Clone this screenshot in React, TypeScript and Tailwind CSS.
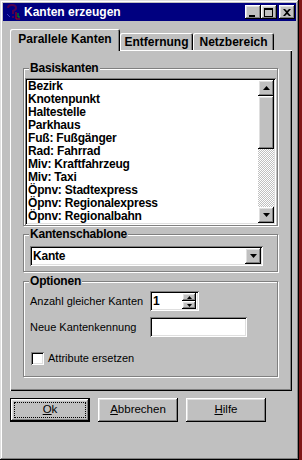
import React from "react";

const raised =
  "shadow-[inset_-1px_-1px_#000,inset_1px_1px_#fff,inset_-2px_-2px_#808080,inset_2px_2px_#dfdfdf]";
const sunken =
  "shadow-[inset_1px_1px_#808080,inset_-1px_-1px_#fff,inset_2px_2px_#000,inset_-2px_-2px_#dfdfdf]";

const items = [
  "Bezirk",
  "Knotenpunkt",
  "Haltestelle",
  "Parkhaus",
  "Fuß: Fußgänger",
  "Rad: Fahrrad",
  "Miv: Kraftfahrzeug",
  "Miv: Taxi",
  "Öpnv: Stadtexpress",
  "Öpnv: Regionalexpress",
  "Öpnv: Regionalbahn",
];

const Arrow = ({ up, w = 7 }: { up?: boolean; w?: number }) => {
  const h = Math.ceil(w / 2);
  return (
    <svg width={w} height={h} viewBox={`0 0 ${w} ${h}`}>
      <polygon
        points={up ? `${w / 2},0 ${w},${h} 0,${h}` : `0,0 ${w},0 ${w / 2},${h}`}
        fill="#000"
      />
    </svg>
  );
};

const Group = ({
  title,
  className,
  children,
}: {
  title: string;
  className: string;
  children: React.ReactNode;
}) => (
  <div className="relative pt-[6px]">
    <span className="absolute left-[6px] top-0 bg-[#c0c0c0] px-[1px] text-[12px] font-bold leading-[13px] tracking-[-0.2px]">
      {title}
    </span>
    <div
      className={
        "w-[255px] border border-[#808080] shadow-[inset_1px_1px_#fff,1px_1px_#fff] " +
        className
      }
    >
      {children}
    </div>
  </div>
);

const TitleBtn = ({ children, className }: { children: React.ReactNode; className?: string }) => (
  <div className={`flex h-[14px] w-[16px] items-center justify-center bg-[#c0c0c0] ${raised} ${className ?? ""}`}>
    {children}
  </div>
);

const Button = ({ first, rest, def }: { first: string; rest: string; def?: boolean }) =>
  def ? (
    <div className="h-[24px] w-[80px] border border-black">
      <div className={`flex h-full w-full items-center justify-center bg-[#c0c0c0] p-[3px] ${raised}`}>
        <div className="flex h-full w-full items-center justify-center border border-dotted border-black text-[11.5px]">
          <span className="underline underline-offset-1">{first}</span>
          {rest}
        </div>
      </div>
    </div>
  ) : (
    <div className={`flex h-[24px] w-[80px] items-center justify-center bg-[#c0c0c0] text-[11.5px] ${raised}`}>
      <span className="underline underline-offset-1">{first}</span>
      {rest}
    </div>
  );

export default function App() {
  return (
    <div className="h-[460px] w-[302px] bg-[#801818] font-['Liberation_Sans',Arial,sans-serif] text-black">
      <div className="flex h-[460px] w-[299px] flex-col bg-[#c0c0c0] p-[3px] shadow-[inset_-1px_-1px_#000,inset_1px_1px_#dfdfdf,inset_-2px_-2px_#808080,inset_2px_2px_#fff]">
        {/* title bar */}
        <div className="flex h-[18px] items-center bg-[#000080] pl-[2px] pr-[1px]">
          <svg width="16" height="16" viewBox="0 0 16 16">
            <path d="M3 4 Q3 1 7 1 Q11 1 11 4 Q11 6 8 7 L8 10" fill="none" stroke="#500050" strokeWidth="2" />
            <rect x="7" y="12" width="2" height="2" fill="#500050" />
            <path d="M11 8 L11 15 L15 15" fill="none" stroke="#c00000" strokeWidth="1" />
            <path d="M13 9 L13 13 L15 13" fill="none" stroke="#00a000" strokeWidth="1" />
            <path d="M2 10 L5 13" stroke="#4040c0" strokeWidth="1" />
          </svg>
          <span className="ml-[3px] text-[12px] font-bold leading-none text-white">Kanten erzeugen</span>
          <div className="ml-auto flex">
            <TitleBtn>
              <svg width="8" height="9" viewBox="0 0 8 9" className="-ml-[1px]">
                <rect x="0" y="7" width="6" height="2" fill="#000" />
              </svg>
            </TitleBtn>
            <TitleBtn>
              <svg width="9" height="9" viewBox="0 0 9 9" className="-ml-[1px]">
                <rect x="0.5" y="0.5" width="8" height="8" fill="none" stroke="#000" />
                <rect x="0" y="0" width="9" height="2" fill="#000" />
              </svg>
            </TitleBtn>
            <TitleBtn className="ml-[2px]">
              <svg width="8" height="7" viewBox="0 0 8 7" className="-ml-[1px]">
                <path d="M0 0 L2 0 L4 2 L6 0 L8 0 L5 3.5 L8 7 L6 7 L4 5 L2 7 L0 7 L3 3.5 Z" fill="#000" />
              </svg>
            </TitleBtn>
          </div>
        </div>

        {/* tabs */}
        <div className="ml-[7px] mt-[8px] w-[282px]">
          <div className="flex h-[21px] items-end">
            <div className="relative z-10 -mb-[1px] flex h-[22px] w-[110px] items-center justify-center rounded-t-[2px] bg-[#c0c0c0] pb-[2px] text-[12px] font-bold shadow-[inset_1px_1px_#fff,inset_-1px_0_#000,inset_-2px_0_#808080]">
              Parallele Kanten
            </div>
            <div className="flex h-[17px] w-[73px] items-center justify-center rounded-t-[2px] text-[12px] font-bold shadow-[inset_1px_1px_#fff,inset_-1px_0_#000,inset_-2px_0_#808080]">
              Entfernung
            </div>
            <div className="flex h-[17px] w-[81px] items-center justify-center rounded-t-[2px] text-[12px] font-bold shadow-[inset_1px_1px_#fff,inset_-1px_0_#000,inset_-2px_0_#808080]">
              Netzbereich
            </div>
          </div>

          <div className="flex h-[341px] flex-col px-[13px] pt-[12px] shadow-[inset_1px_1px_#fff,inset_-1px_-1px_#000,inset_-2px_-2px_#808080]">
            <Group title="Basiskanten" className="px-[1px] pt-[9px]">
              <div className={`flex h-[147px] bg-white p-[2px] ${sunken}`}>
                <div className="flex-1 overflow-hidden">
                  {items.map((it) => (
                    <div
                      key={it}
                      className="h-[13px] whitespace-nowrap pl-[1px] text-[12px] font-bold leading-[13px] tracking-[-0.2px]"
                    >
                      {it}
                    </div>
                  ))}
                </div>
                <div className="flex w-[16px] flex-col">
                  <div className={`flex h-[16px] items-center justify-center bg-[#c0c0c0] ${raised}`}>
                    <Arrow up />
                  </div>
                  <div className={`h-[53px] bg-[#c0c0c0] ${raised}`} />
                  <div className="flex-1 bg-[repeating-conic-gradient(#fff_0%_25%,#c0c0c0_0%_50%)] bg-[length:2px_2px]" />
                  <div className={`flex h-[16px] items-center justify-center bg-[#c0c0c0] ${raised}`}>
                    <Arrow />
                  </div>
                </div>
              </div>
            </Group>

            <div className="mt-[2px]">
              <Group title="Kantenschablone" className="px-[6px] pb-[5px] pt-[11px]">
                <div className={`flex h-[20px] w-[233px] items-center bg-white p-[2px] ${sunken}`}>
                  <span className="flex-1 pl-[1px] text-[12px] font-bold tracking-[-0.2px]">Kante</span>
                  <div className={`flex h-[16px] w-[16px] items-center justify-center bg-[#c0c0c0] ${raised}`}>
                    <Arrow />
                  </div>
                </div>
              </Group>
            </div>

            <div className="mt-[3px]">
              <Group title="Optionen" className="px-[6px] pb-[11px] pt-[9px]">
                <div className="flex h-[20px] items-center">
                  <span className="w-[120px] text-[11px]">Anzahl gleicher Kanten</span>
                  <div className={`flex h-[20px] w-[49px] items-center bg-white p-[2px] ${sunken}`}>
                    <span className="flex-1 pl-[1px] text-[12px] font-bold">1</span>
                    <div className="mr-[1px] flex flex-col">
                      <div className={`flex h-[8px] w-[14px] items-center justify-center bg-[#c0c0c0] ${raised}`}>
                        <Arrow up w={5} />
                      </div>
                      <div className={`flex h-[8px] w-[14px] items-center justify-center bg-[#c0c0c0] ${raised}`}>
                        <Arrow w={5} />
                      </div>
                    </div>
                  </div>
                </div>
                <div className="mt-[6px] flex h-[20px] items-center">
                  <span className="w-[120px] text-[11px]">Neue Kantenkennung</span>
                  <div className={`h-[20px] w-[97px] bg-white ${sunken}`} />
                </div>
                <div className="mt-[15px] flex h-[13px] items-center pl-[1px]">
                  <div className={`h-[13px] w-[13px] bg-white ${sunken}`} />
                  <span className="ml-[4px] text-[11px]">Attribute ersetzen</span>
                </div>
              </Group>
            </div>
          </div>
        </div>

        {/* buttons */}
        <div className="ml-[7px] mt-[7px] flex gap-[8px]">
          <Button def first="O" rest="k" />
          <Button first="A" rest="bbrechen" />
          <Button first="H" rest="ilfe" />
        </div>
      </div>
    </div>
  );
}
